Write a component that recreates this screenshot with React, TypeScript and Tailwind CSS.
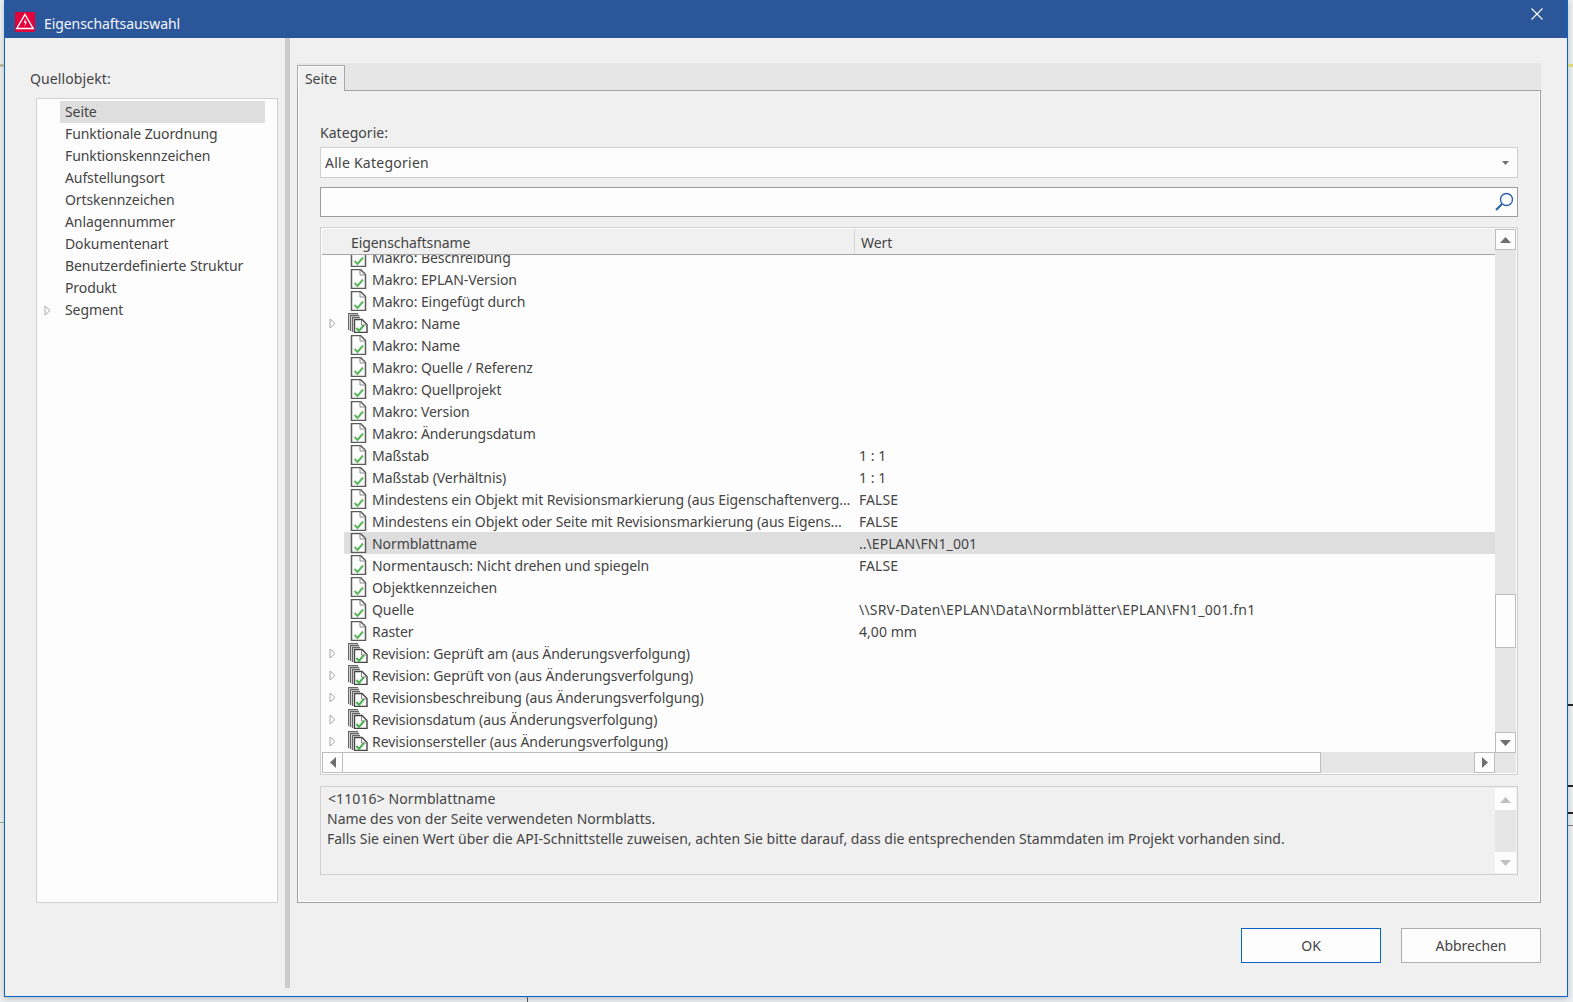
import React from "react";

const Doc = () => (
  <svg width="18" height="20" viewBox="0 0 18 20" className="shrink-0" fill="none">
    <path d="M2.5 0.5H11.5L16.5 5.5V19.5H2.5Z" fill="#fdfdfd" stroke="#5c5c5c" strokeWidth="1.5" />
    <path d="M11 1V6H16" stroke="#888888" strokeWidth="1" />
    <path d="M5.5 14L8.5 17L14 10.5" stroke="#5cb85c" strokeWidth="2" />
  </svg>
);

const StackDoc = () => (
  <svg width="20" height="20" viewBox="0 0 20 20" className="shrink-0 -ml-px" fill="none">
    <path d="M0.5 17V0.5H10" stroke="#666666" strokeWidth="1.3" />
    <path d="M2.5 18V2.5H11" stroke="#666666" strokeWidth="1.3" />
    <path d="M4.5 19V4.5H12" stroke="#666666" strokeWidth="1.3" />
    <path d="M6.5 6.5H14L19 11.5V19.5H6.5Z" fill="#fdfdfd" stroke="#444444" strokeWidth="1.4" />
    <path d="M13.5 7V12H18.5" stroke="#888888" />
    <path d="M8.5 15L11 18L16 12" stroke="#4cb050" strokeWidth="2" />
  </svg>
);

const Chevron = () => (
  <svg width="7" height="11" viewBox="0 0 7 11" fill="none">
    <path d="M1 1L6 5.5L1 10Z" stroke="#a8a8a8" fill="#fdfdfd" />
  </svg>
);

type Row = { n: string; v?: string; stack?: boolean; sel?: boolean };
const rows: Row[] = [
  { n: "Makro: Beschreibung" },
  { n: "Makro: EPLAN-Version" },
  { n: "Makro: Eingefügt durch" },
  { n: "Makro: Name", stack: true },
  { n: "Makro: Name" },
  { n: "Makro: Quelle / Referenz" },
  { n: "Makro: Quellprojekt" },
  { n: "Makro: Version" },
  { n: "Makro: Änderungsdatum" },
  { n: "Maßstab", v: "1 : 1" },
  { n: "Maßstab (Verhältnis)", v: "1 : 1" },
  { n: "Mindestens ein Objekt mit Revisionsmarkierung (aus Eigenschaftenverg...", v: "FALSE" },
  { n: "Mindestens ein Objekt oder Seite mit Revisionsmarkierung (aus Eigens...", v: "FALSE" },
  { n: "Normblattname", v: "..\\EPLAN\\FN1_001", sel: true },
  { n: "Normentausch: Nicht drehen und spiegeln", v: "FALSE" },
  { n: "Objektkennzeichen" },
  { n: "Quelle", v: "\\\\SRV-Daten\\EPLAN\\Data\\Normblätter\\EPLAN\\FN1_001.fn1" },
  { n: "Raster", v: "4,00 mm" },
  { n: "Revision: Geprüft am (aus Änderungsverfolgung)", stack: true },
  { n: "Revision: Geprüft von (aus Änderungsverfolgung)", stack: true },
  { n: "Revisionsbeschreibung (aus Änderungsverfolgung)", stack: true },
  { n: "Revisionsdatum (aus Änderungsverfolgung)", stack: true },
  { n: "Revisionsersteller (aus Änderungsverfolgung)", stack: true },
];

const tree = [
  "Seite",
  "Funktionale Zuordnung",
  "Funktionskennzeichen",
  "Aufstellungsort",
  "Ortskennzeichen",
  "Anlagennummer",
  "Dokumentenart",
  "Benutzerdefinierte Struktur",
  "Produkt",
  "Segment",
];

const Tri = ({ d, c = "#6e6e6e" }: { d: "u" | "d" | "l" | "r"; c?: string }) => {
  const p = { u: "M5.5 1L11 7H0Z", d: "M0 1H11L5.5 7Z", l: "M7 0V11L1 5.5Z", r: "M1 0V11L7 5.5Z" }[d];
  return (
    <svg width="11" height="11" viewBox="0 0 11 11" className="block">
      <g transform={d === "u" || d === "d" ? "translate(0 2)" : "translate(2 0)"}>
        <path d={p} fill={c} />
      </g>
    </svg>
  );
};

export default function App() {
  return (
    <div
      className="relative w-[1573px] h-[1002px] overflow-hidden bg-[#eceff2] text-[14px] tracking-[-0.07px] text-[#444444]"
      style={{ fontFamily: '"Noto Sans", "Open Sans", sans-serif' }}
    >
      <div className="absolute left-0 top-[64px] w-[4px] h-[3px] bg-[#b8b8a0]" />
      <div className="absolute right-0 top-[64px] w-[5px] h-[3px] bg-[#d8d878]" />
      <div className="absolute right-0 top-[704px] w-[5px] h-[2px] bg-[#222222]" />
      <div className="absolute right-0 top-[785px] w-[5px] h-[2px] bg-[#222222]" />
      <div className="absolute right-0 top-[812px] w-[5px] h-[2px] bg-[#222222]" />
      <div className="absolute right-0 top-[825px] w-[5px] h-px bg-[#777777]" />
      <div className="absolute left-[527px] top-[997px] w-px h-[5px] bg-[#555555]" />
      <div className="absolute left-0 top-[822px] w-[4px] h-px bg-[#8aa88a]" />

      <div className="ml-[4px] w-[1564px] h-[997px] flex flex-col border-x border-b border-[#0a64c8] bg-[#f0f0f0] shadow-[0_2px_6px_rgba(0,0,0,0.2)]">
        <div className="h-[38px] shrink-0 flex items-center bg-[#2b579a] text-[#f4f6fa]">
          <svg width="20" height="20" viewBox="0 0 20 20" className="ml-[10px] mt-[6px] shrink-0">
            <rect width="20" height="20" rx="1" fill="#e4003a" />
            <path d="M10 2.5L18.2 16.5H1.8Z" fill="none" stroke="#fff" strokeWidth="1.4" />
            <path d="M10.6 6.5L8.6 10.8H10.2L9.4 14.5L12 9.8H10.4Z" fill="#fff" />
          </svg>
          <span className="ml-[9px] mt-[9px]">Eigenschaftsauswahl</span>
          <svg width="12" height="12" viewBox="0 0 12 12" className="ml-auto mr-[24px] -mt-[10px]" fill="none">
            <path d="M0.5 0.5L11.5 11.5M11.5 0.5L0.5 11.5" stroke="#fff" strokeWidth="1.1" />
          </svg>
        </div>

        <div className="flex flex-1 min-h-0">
          <div className="w-[280px] shrink-0 pl-[25px] pt-[30px]">
            <div className="h-[22px] leading-[22px] tracking-[0.1px]">Quellobjekt:</div>
            <div className="ml-[6px] mt-[8px] w-[242px] h-[805px] border border-[#d2d2d2] bg-[#fdfdfd] pt-[2px] pr-[12px] tracking-[-0.1px]">
              {tree.map((t, i) => (
                <div key={t} className="flex h-[22px] items-center">
                  <div className="w-[23px] shrink-0 pl-[7px] flex">{i === 9 && <Chevron />}</div>
                  <div className={`flex-1 pl-[5px] h-[22px] leading-[21px] ${i === 0 ? "bg-[#dedede]" : ""}`}>
                    {t}
                  </div>
                </div>
              ))}
            </div>
          </div>

          <div className="w-[5px] h-[950px] shrink-0 bg-[#cccccc]" />

          <div className="ml-[7px] w-[1244px] pt-[25px] flex flex-col">
            <div className="h-[27px] bg-[#e6e6e6] flex items-end shrink-0">
              <div className="w-[48px] h-[26px] -mb-px z-10 border-x border-t border-[#a8a8a8] bg-[#f0f0f0] pl-[7px] leading-[26px] shadow-[inset_1px_1px_0_#fff]">
                Seite
              </div>
            </div>
            <div className="h-[813px] shrink-0 border border-[#a0a0a0] bg-[#f0f0f0] shadow-[inset_1px_-1px_0_#fff,inset_-1px_0_0_#fff] pl-[22px] pr-[22px] pt-[30px]">
              <div className="h-[22px] leading-[24px] tracking-[0.05px]">Kategorie:</div>
              <div className="mt-[4px] h-[31px] border border-[#d0d0d0] bg-[#fdfdfd] flex items-center pl-[4px] pr-[8px]">
                <span className="tracking-[0.25px]">Alle Kategorien</span>
                <svg width="7" height="4" viewBox="0 0 7 4" className="ml-auto">
                  <path d="M0 0H7L3.5 4Z" fill="#707070" />
                </svg>
              </div>
              <div className="mt-[9px] h-[30px] border border-[#9c9c9c] bg-[#fdfdfd] flex items-center justify-end pr-[3px]">
                <svg width="20" height="20" viewBox="0 0 20 20" fill="none">
                  <circle cx="12.5" cy="7.5" r="6" stroke="#2b62ad" strokeWidth="1.4" />
                  <path d="M8 12L2 18" stroke="#2b62ad" strokeWidth="2.2" />
                </svg>
              </div>

              <div className="mt-[10px] h-[548px] border border-[#d0d0d0] bg-[#fdfdfd] flex p-px">
                <div className="w-[1173px] shrink-0 flex flex-col">
                  <div className="h-[26px] shrink-0 flex border-b border-[#a6a6a6] bg-[#f0f0f0]">
                    <div className="w-[533px] pl-[29px] border-r border-[#d8d8d8] leading-[27px]">Eigenschaftsname</div>
                    <div className="pl-[6px] leading-[27px]">Wert</div>
                  </div>
                  <div className="h-[497px] overflow-hidden">
                    <div className="-mt-[9px]">
                      {rows.map((r, i) => (
                        <div key={i} className="flex h-[22px] items-center pl-[7px]">
                          <div className="w-[15px] shrink-0 flex">{r.stack && <Chevron />}</div>
                          <div className={`flex flex-1 h-[22px] items-center ${r.sel ? "bg-[#dedede]" : ""}`}>
                            <div className="w-[515px] shrink-0 flex items-center pl-[5px]">
                              <div className="w-[23px] shrink-0 flex">{r.stack ? <StackDoc /> : <Doc />}</div>
                              <span className="whitespace-nowrap">{r.n}</span>
                            </div>
                            <span className={`whitespace-nowrap ${r.n === "Quelle" ? "tracking-[0.2px]" : "tracking-[0.05px]"}`}>
                              {r.v}
                            </span>
                          </div>
                        </div>
                      ))}
                    </div>
                  </div>
                  <div className="h-[21px] shrink-0 flex bg-[#e6e6e6]">
                    <div className="w-[21px] border border-[#bdbdbd] bg-[#fdfdfd] flex items-center justify-center">
                      <Tri d="l" />
                    </div>
                    <div className="w-[978px] border border-[#bdbdbd] border-l-0 bg-[#fdfdfd]" />
                    <div className="ml-auto w-[21px] border border-[#bdbdbd] bg-[#fdfdfd] flex items-center justify-center">
                      <Tri d="r" />
                    </div>
                  </div>
                </div>
                <div className="w-[21px] shrink-0 bg-[#e6e6e6] flex flex-col">
                  <div className="h-[21px] border border-[#bdbdbd] bg-[#fdfdfd] flex items-center justify-center">
                    <Tri d="u" />
                  </div>
                  <div className="mt-[344px] h-[54px] border border-[#bdbdbd] bg-[#fdfdfd]" />
                  <div className="mt-[84px] h-[21px] border border-[#bdbdbd] bg-[#fdfdfd] flex items-center justify-center">
                    <Tri d="d" />
                  </div>
                </div>
              </div>

              <div className="mt-[11px] h-[89px] border border-[#d0d0d0] flex p-px">
                <div className="w-[1173px] shrink-0 pl-[5px] pt-px leading-[20px] tracking-normal">
                  <div className="pl-px tracking-[0.1px]">&lt;11016&gt; Normblattname</div>
                  <div>Name des von der Seite verwendeten Normblatts.</div>
                  <div>
                    Falls Sie einen Wert über die API-Schnittstelle zuweisen, achten Sie bitte darauf, dass die
                    entsprechenden Stammdaten im Projekt vorhanden sind.
                  </div>
                </div>
                <div className="w-[21px] shrink-0 bg-[#e6e6e6] flex flex-col justify-between">
                  <div className="h-[22px] bg-[#fdfdfd] flex items-center justify-center">
                    <Tri d="u" c="#c0c0c0" />
                  </div>
                  <div className="h-[21px] bg-[#fdfdfd] flex items-center justify-center">
                    <Tri d="d" c="#c0c0c0" />
                  </div>
                </div>
              </div>
            </div>
            <div className="mt-[25px] flex justify-end gap-[20px]">
              <button className="w-[140px] h-[35px] border border-[#0a64c8] bg-[#fdfdfd]">OK</button>
              <button className="w-[140px] h-[35px] border border-[#adadad] bg-[#fdfdfd]">Abbrechen</button>
            </div>
          </div>
        </div>
      </div>
    </div>
  );
}
